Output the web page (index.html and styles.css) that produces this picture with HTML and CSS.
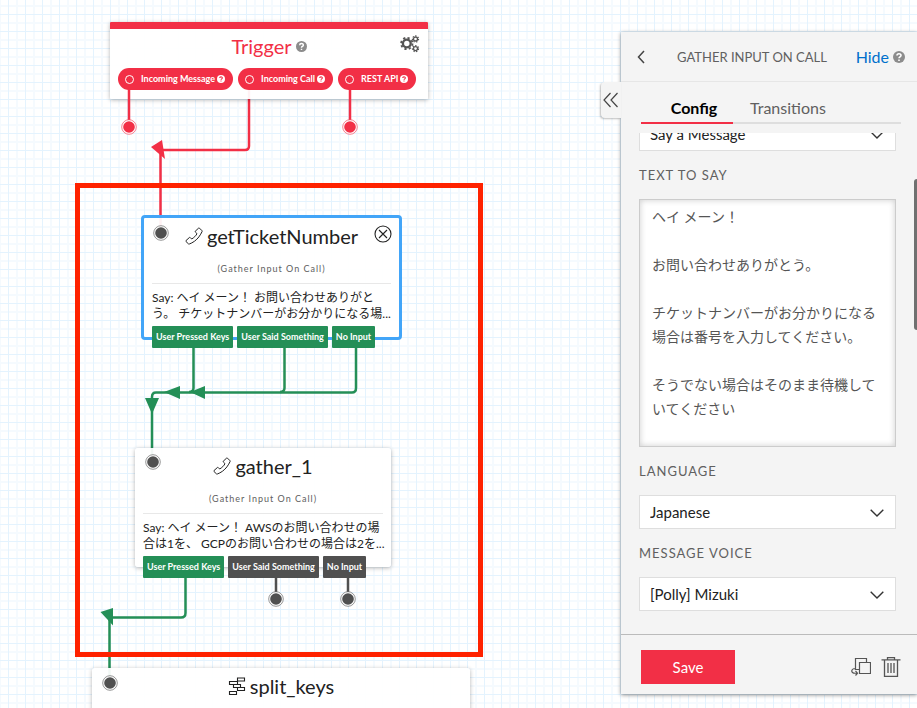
FILE: index.html
```html
<!DOCTYPE html>
<html lang="ja">
<head>
<meta charset="utf-8">
<title>Studio flow</title>
<link rel="stylesheet" href="styles.css">
</head>
<body>
<svg class="defs" width="0" height="0" aria-hidden="true">
  <defs>
    <symbol id="help" viewBox="0 0 12 12">
      <circle cx="6" cy="6" r="6" fill="currentColor"/>
      <path class="mark" d="M4 4.6C4 2.2 8 2.2 8 4.5C8 6 6 5.9 6 7.3M6 8.4V9.9" fill="none" stroke-width="1.6"/>
    </symbol>
    <symbol id="phone" viewBox="0 0 18 18">
      <path d="M10.200 4.300L13.600 1.100Q14.100 .8 14.500 1.200L17 3.700Q17.300 4.100 17.100 4.500L15.700 7.200C13.500 11 10.500 14 6.800 15.900L4.300 17Q3.800 17.200 3.400 16.800L.9 14.400Q.6 14 1 13.600L4.400 10.500Q4.800 10.200 5.200 10.500L6.700 12C8.900 10.700 11 8.700 12 6.700L10.300 5Q10 4.600 10.200 4.300Z" fill="none" stroke="currentColor" stroke-width="1" stroke-linejoin="round"/>
    </symbol>
    <symbol id="chevron" viewBox="0 0 14 8">
      <path d="M.7 .7L7 7L13.300 .7" fill="none" stroke="currentColor" stroke-width="1.400"/>
    </symbol>
    <symbol id="dot" viewBox="0 0 16 16">
      <circle cx="8" cy="8" r="7.300" fill="#fff" stroke="currentColor" stroke-width=".6"/>
      <circle cx="8" cy="8" r="5.800" fill="currentColor"/>
    </symbol>
  </defs>
</svg>

<main class="canvas">
  <svg class="wires" aria-hidden="true">
    <g class="red">
      <path d="M249 90V146Q249 150 245 150H160.500V232"/>
      <path class="tip" d="M151 147L162 140L165 159Z"/>
    </g>
    <g class="green">
      <path d="M193.500 345V388Q193.500 392 189 392"/>
      <path d="M284.500 345V388Q284.500 392 280 392"/>
      <path d="M356 345V388Q356 392.500 352 392.500H156Q152 392.500 152 397V462"/>
      <path class="tip" d="M164 392L180 386V399ZM190 392L205 386V399ZM145 398H159L152 414Z"/>
      <path d="M185.500 570V613Q185.500 617.500 181 617.500H109.500V683"/>
      <path class="tip" d="M100.500 612L113 608V625.500Z"/>
    </g>
  </svg>

  <section class="node trigger">
    <h2 class="title">Trigger <svg class="help"><use href="#help"/></svg></h2>
    <button class="gear" type="button" aria-label="Settings">
      <svg viewBox="0 0 20 18" fill="none" stroke="currentColor">
        <circle cx="6.800" cy="8.500" r="3.900" stroke-width="2.400"/>
        <circle cx="6.800" cy="8.500" r="5.700" stroke-width="1.800" stroke-dasharray="2.240 2.240"/>
        <circle cx="15.500" cy="4" r="2" stroke-width="1.300"/>
        <circle cx="15.500" cy="4" r="3.100" stroke-width="1.100" stroke-dasharray="1.390 1.390"/>
        <circle cx="15.500" cy="13.600" r="2" stroke-width="1.300"/>
        <circle cx="15.500" cy="13.600" r="3.100" stroke-width="1.100" stroke-dasharray="1.390 1.390"/>
      </svg>
    </button>
    <div class="pills">
      <span class="pill"><i class="ring"></i>Incoming Message<svg class="help"><use href="#help"/></svg></span>
      <span class="pill"><i class="ring"></i>Incoming Call<svg class="help"><use href="#help"/></svg></span>
      <span class="pill"><i class="ring"></i>REST API<svg class="help"><use href="#help"/></svg></span>
    </div>
  </section>

  <section class="node ticket">
    <h2 class="title"><svg class="icon"><use href="#phone"/></svg>getTicketNumber</h2>
    <button class="close" type="button" aria-label="Remove">
      <svg viewBox="0 0 18 18" fill="none" stroke="currentColor" stroke-width="1.100"><circle cx="9" cy="9" r="8"/><path d="M5 5L13 13M13 5L5 13"/></svg>
    </button>
    <p class="kind">(Gather Input On Call)</p>
    <p class="say">Say: ヘイ メーン！ お問い合わせありがと<br>う。 チケットナンバーがお分かりになる場...</p>
    <div class="exits"><span class="exit on">User Pressed Keys</span><span class="exit on">User Said Something</span><span class="exit on">No Input</span></div>
  </section>

  <section class="node gather">
    <h2 class="title"><svg class="icon"><use href="#phone"/></svg>gather_1</h2>
    <p class="kind">(Gather Input On Call)</p>
    <p class="say">Say: ヘイ メーン！ AWSのお問い合わせの場<br>合は1を、 GCPのお問い合わせの場合は2を...</p>
    <div class="exits"><span class="exit on">User Pressed Keys</span><span class="exit">User Said Something</span><span class="exit">No Input</span></div>
  </section>

  <section class="node split">
    <h2 class="title"><svg class="icon" viewBox="0 0 18 18" fill="none" stroke="currentColor" stroke-width="1.100"><path d="M9.500 1H16.500V4H9.500ZM1.500 4.500H9.500V7.500H1.500ZM5.500 7.500H12.500V10.500H5.500ZM9.500 10.500H16.500V13.500H9.500ZM1.500 14.500H8.500V17.500H1.500Z"/></svg>split_keys</h2>
  </section>

  <svg class="wires" aria-hidden="true">
    <path class="red" d="M129 89V127M350 89V127"/>
    <path class="gray" d="M276 577V599M348 577V599"/>
    <g class="reddot"><use href="#dot" x="121" y="119" width="16" height="16"/><use href="#dot" x="342" y="119" width="16" height="16"/></g>
    <g class="graydot">
      <use href="#dot" x="153" y="225" width="16" height="16"/><use href="#dot" x="145" y="454" width="16" height="16"/>
      <use href="#dot" x="268" y="591" width="16" height="16"/><use href="#dot" x="340" y="591" width="16" height="16"/>
      <use href="#dot" x="102" y="675" width="16" height="16"/>
    </g>
  </svg>
  <div class="highlight"></div>
</main>

<aside class="panel">
  <button class="flap" type="button" aria-label="Expand"><svg viewBox="0 0 16 16" fill="none" stroke="currentColor" stroke-width="1.200"><path d="M7.500 1L1 8L7.500 15M14.500 1L8 8L14.500 15"/></svg></button>
  <header class="head">
    <button class="back" type="button" aria-label="Back"><svg viewBox="0 0 8 14" fill="none" stroke="currentColor" stroke-width="1.500"><path d="M7 1L1.500 7L7 13"/></svg></button>
    <h1>GATHER INPUT ON CALL</h1>
    <a href="#">Hide</a>
    <svg class="help"><use href="#help"/></svg>
  </header>
  <nav class="tabs"><a class="tab active" href="#">Config</a><a class="tab" href="#">Transitions</a></nav>
  <form class="fields" id="config">
    <div class="select"><select aria-label="Say or play"><option>Say a Message</option></select><svg><use href="#chevron"/></svg></div>
    <label for="text">TEXT TO SAY</label>
    <textarea id="text">ヘイ メーン！

お問い合わせありがとう。

チケットナンバーがお分かりになる場合は番号を入力してください。

そうでない場合はそのまま待機していてください</textarea>
    <label for="language">LANGUAGE</label>
    <div class="select"><select id="language"><option>Japanese</option></select><svg><use href="#chevron"/></svg></div>
    <label for="voice">MESSAGE VOICE</label>
    <div class="select"><select id="voice"><option>[Polly] Mizuki</option></select><svg><use href="#chevron"/></svg></div>
  </form>
  <div class="thumb"></div>
  <footer class="foot">
    <button class="save" type="submit" form="config">Save</button>
    <button class="tool" type="button" aria-label="Duplicate"><svg viewBox="0 0 20 20" fill="none" stroke="currentColor" stroke-width="1.200"><path d="M8 12.500H4.500V1.500H15.500V5.500M8.500 5.500H19.500V16.500H8.500ZM4 11.500C1 11.500 0 14 1.500 15.500Q2.500 16.500 6 16.200M4.500 14L6.500 16.200L4.500 18.500"/></svg></button>
    <button class="tool" type="button" aria-label="Delete"><svg viewBox="0 0 20 20" fill="none" stroke="currentColor" stroke-width="1.300"><path d="M.5 2.800H19.500M6.500 2.800V.7H13.500V2.800M3.500 3V19.300H16.500V3M7 6V16M10 6V16M13 6V16"/></svg></button>
  </footer>
</aside>
</body>
</html>
```

FILE: styles.css
```css
* { box-sizing: border-box; }
body {
  margin: 0;
  min-height: 100vh;
  position: relative;
  overflow: hidden;
  font-family: Lato, "Noto Sans CJK JP", sans-serif;
  color: #222;
}
h1, h2, p { margin: 0; font-weight: 400; }
button { padding: 0; border: 0; background: none; font: inherit; color: inherit; }
svg { display: block; flex: none; }
.defs { position: absolute; }
.mark { stroke: var(--mark, #fff); }

.canvas {
  position: relative;
  height: 100vh;
  overflow: hidden;
  background-color: #fff;
  background-image:
    linear-gradient(90deg, #e4f3fe 1px, transparent 1px),
    linear-gradient(#e4f3fe 1px, transparent 1px),
    linear-gradient(90deg, #f5fafe 2px, transparent 2px),
    linear-gradient(#f5fafe 2px, transparent 2px);
  background-size: 17px 17px;
  background-position: 8px 0, 0 14px, 16px 0, 0 5px;
}
.wires { position: absolute; inset: 0; width: 100%; height: 100%; fill: none; stroke-width: 2.5px; }
.red { stroke: #f22f46; }
.green { stroke: #248f57; }
.gray { stroke: #505050; }
.red .tip { fill: #f22f46; stroke: none; }
.green .tip { fill: #248f57; stroke: none; }
.reddot { color: #f22f46; }
.graydot { color: #505050; }

.node {
  position: absolute;
  padding: 4px 8px 0;
  border-radius: 3px;
  background: rgba(255, 255, 255, .94);
  box-shadow: 0 1px 4px rgba(0, 0, 0, .3);
}
.title {
  display: flex;
  align-items: center;
  justify-content: center;
  gap: 4px;
  font-size: 20px;
  line-height: 28px;
}
.icon { width: 18px; height: 18px; }
.kind { margin-top: 12px; font-size: 9px; line-height: 14px; letter-spacing: 1px; text-align: center; color: #606060; }
.say { margin-top: 7px; padding-top: 6px; border-top: 1px solid #e8e8e8; font-size: 12px; line-height: 16px; white-space: nowrap; }
.exits { display: flex; gap: 4px; margin-top: 4px; }
.exit {
  padding: 0 4px;
  border-radius: 1px;
  background: #505050;
  color: #fff;
  font-size: 9px;
  font-weight: 700;
  line-height: 22px;
  white-space: nowrap;
}
.exit.on { background: #248f57; }

.trigger { left: 110px; top: 22px; width: 318px; height: 77px; padding-top: 3px; border-top: 7px solid #f22f46; border-radius: 1px; }
.trigger .title { color: #f22f46; }
.title .help { width: 11px; height: 11px; color: #8c8c8c; }
.gear { position: absolute; right: 8px; top: 6px; color: #555; }
.gear svg { width: 20px; height: 18px; }
.pills { display: flex; gap: 5px; margin-top: 8px; }
.pill {
  display: flex;
  align-items: center;
  padding: 0 8px 0 7px;
  border-radius: 11px;
  background: #f22f46;
  color: #fff;
  font-size: 9px;
  font-weight: 700;
  line-height: 22px;
  white-space: nowrap;
}
.pill .help { width: 8px; height: 8px; margin-left: 2px; --mark: #f22f46; }
.ring { width: 9px; height: 9px; margin-right: 7px; border: 1px solid #fff; border-radius: 50%; }
.ticket { left: 141px; top: 215px; width: 261px; height: 125px; border: 3px solid #42a5f8; border-radius: 4px; box-shadow: none; }
.close { position: absolute; right: 7px; top: 7px; }
.close svg { width: 18px; height: 18px; }
.gather { left: 135px; top: 448px; width: 256px; height: 119px; }
.split { left: 92px; top: 668px; width: 378px; height: 120px; }
.highlight { position: absolute; left: 75px; top: 183px; width: 408px; height: 474px; border: 5px solid #ff2200; }

.panel {
  position: absolute;
  top: 32px;
  right: 0;
  bottom: 14px;
  width: 296px;
  display: flex;
  flex-direction: column;
  background: #f4f4f4;
  box-shadow: 0 1px 4px rgba(0, 0, 0, .45);
}
.flap {
  position: absolute;
  left: -20px;
  top: 50px;
  width: 20px;
  height: 36px;
  padding-left: 2px;
  border-radius: 4px 0 0 4px;
  background: #f4f4f4;
  box-shadow: -1px 1px 2px rgba(0, 0, 0, .25);
  color: #444;
}
.flap svg { width: 16px; height: 16px; }
.head { display: flex; align-items: center; height: 50px; padding: 0 12px 0 16px; border-bottom: 1px solid #e6e6e6; }
.back { margin-right: 32px; color: #444; }
.back svg { width: 8px; height: 14px; }
.head h1 { flex: 1; font-size: 13px; color: #606060; white-space: nowrap; }
.head a { font-size: 16px; color: #0070cc; text-decoration: none; }
.head .help { width: 12px; height: 12px; margin-left: 4px; color: #8c8c8c; }
.tabs { display: flex; height: 42px; margin: 0 16px 0 20px; border-bottom: 2px solid #dedede; }
.tab { height: 42px; padding: 13px 17px 0; font-size: 16px; line-height: 26px; color: #606060; text-decoration: none; }
.tab.active { width: 92px; padding: 13px 0 0 14px; text-align: center; font-weight: 700; color: #000; border-bottom: 2px solid #f22f46; }
.fields {
  flex: 1;
  min-height: 0;
  display: flex;
  flex-direction: column;
  justify-content: flex-end;
  overflow: hidden;
  margin-top: 9px;
  padding: 0 21px 23px 18px;
}
.fields label { flex: none; padding: 14px 0; font-size: 13px; line-height: 20px; letter-spacing: 1px; color: #606060; }
.select { position: relative; flex: none; }
.select select {
  display: block;
  width: 100%;
  height: 34px;
  padding: 0 10px;
  border: 1px solid #dedede;
  border-radius: 0;
  appearance: none;
  background: #fff;
  color: #222;
  font: inherit;
  font-size: 15px;
}
.select svg { position: absolute; right: 12px; top: 14px; width: 14px; height: 8px; color: #333; pointer-events: none; }
textarea {
  display: block;
  flex: none;
  width: 100%;
  height: 248px;
  padding: 5px 12px;
  border: 1px solid #ccc;
  border-radius: 0;
  resize: none;
  overflow: hidden;
  background: #fff;
  box-shadow: inset 0 0 6px rgba(0, 0, 0, .2);
  color: #555;
  font: inherit;
  font-size: 14px;
  line-height: 24px;
}
.thumb { position: absolute; right: 0; top: 147px; width: 3px; height: 151px; border-radius: 3px 0 0 3px; background: #707070; }
.foot { display: flex; align-items: center; gap: 10px; height: 60px; padding: 4px 16px 0 20px; border-top: 1px solid #bbb; }
.save { width: 94px; height: 34px; margin-right: auto; background: #f22f46; color: #fff; font-size: 15px; }
.tool { color: #555; }
.tool svg { width: 20px; height: 20px; }
```
